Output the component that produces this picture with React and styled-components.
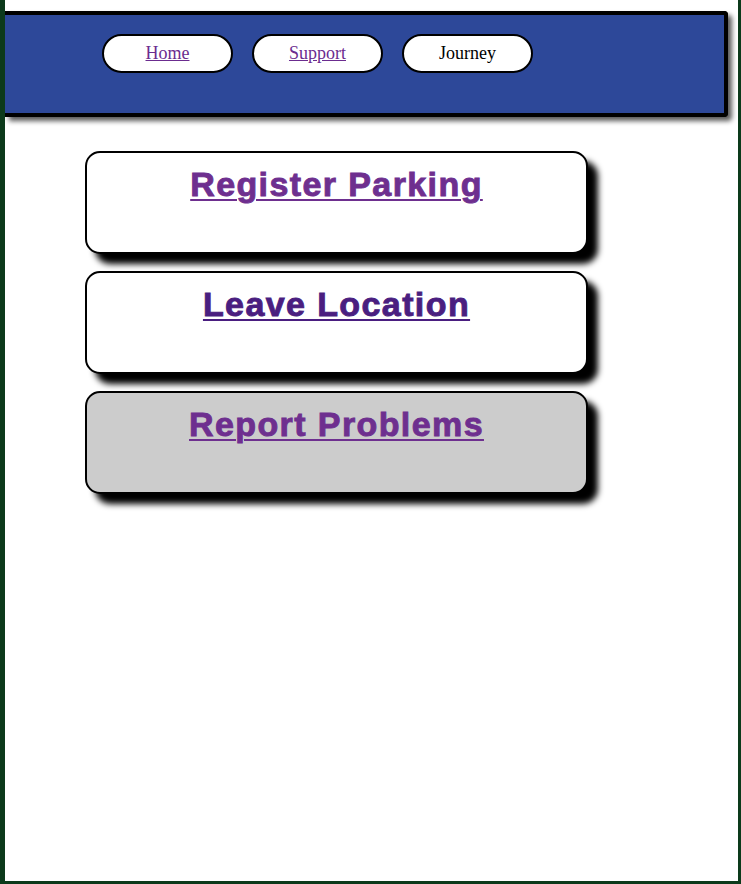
import styled, { createGlobalStyle } from 'styled-components';

const GlobalStyle = createGlobalStyle`
  html, body {
    margin: 0;
    padding: 0;
    background: #ffffff;
  }
`;

const Page = styled.div`
  box-sizing: border-box;
  height: 884px;
  border-left: 5px solid #0c3a1b;
  border-right: 3px solid #0c3a1b;
  border-bottom: 3px solid #0c3a1b;
  background: #ffffff;
  padding-top: 11px;
  overflow: hidden;
`;

const Header = styled.header`
  box-sizing: border-box;
  height: 106px;
  margin-right: 10px;
  background: #2d4899;
  border: 4px solid #000;
  border-left: none;
  border-radius: 0 4px 4px 0;
  box-shadow: 4px 4px 5px rgba(0, 0, 0, 0.65);
  display: flex;
  align-items: flex-start;
  gap: 19px;
  padding: 19px 0 0 97px;
`;

const NavPill = styled.div`
  box-sizing: border-box;
  width: 131px;
  height: 39px;
  border: 2px solid #000;
  border-radius: 20px;
  background: #fff;
  display: flex;
  align-items: center;
  justify-content: center;
  font-family: "Liberation Serif", "Times New Roman", serif;
  font-size: 18px;
  color: #000;
`;

const NavLink = styled.a`
  color: #6b2c8f;
  text-decoration: underline;
`;

const Main = styled.main`
  display: flex;
  flex-direction: column;
  gap: 17px;
  padding: 34px 0 0 80px;
`;

const Card = styled.section`
  box-sizing: border-box;
  width: 503px;
  height: 103px;
  border: 2px solid #000;
  border-radius: 15px;
  background: ${props => (props.$muted ? '#cccccc' : '#ffffff')};
  box-shadow: 10px 10px 6px #000;
  text-align: center;
`;

const CardTitle = styled.h1`
  margin: 13px 0 0;
  font-family: "Liberation Sans", Arial, sans-serif;
  font-weight: 700;
  font-size: 34px;
  letter-spacing: 1.4px;
  line-height: 37px;

  a {
    color: ${props => props.$color};
    -webkit-text-stroke: 0.9px ${props => props.$color};
    text-decoration: underline;
    text-decoration-thickness: 2px;
    text-underline-offset: 3px;
  }
`;

const cards = [
  { title: 'Register Parking', color: '#6e2f8f' },
  { title: 'Leave Location', color: '#4a1e80' },
  { title: 'Report Problems', color: '#6e2f8f', muted: true },
];

const App = () => {
  return (
    <>
      <GlobalStyle />
      <Page>
        <Header>
          <NavPill><NavLink href="#">Home</NavLink></NavPill>
          <NavPill><NavLink href="#">Support</NavLink></NavPill>
          <NavPill>Journey</NavPill>
        </Header>
        <Main>
          {cards.map(card => (
            <Card key={card.title} $muted={card.muted}>
              <CardTitle $color={card.color}>
                <a href="#">{card.title}</a>
              </CardTitle>
            </Card>
          ))}
        </Main>
      </Page>
    </>
  );
};

export default App;
